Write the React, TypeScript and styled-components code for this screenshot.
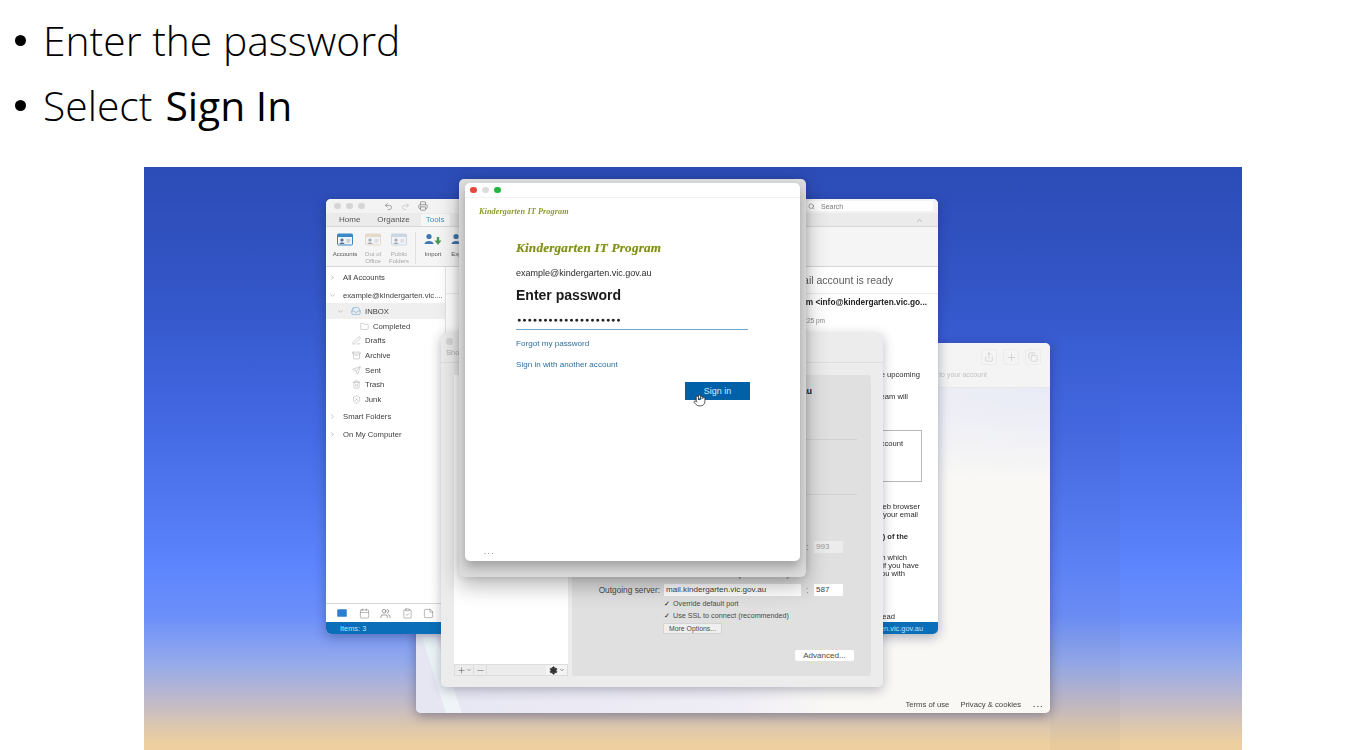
import React from "react";
import styled, { createGlobalStyle } from "styled-components";
import {
  Undo2, Redo2, Printer, ChevronRight, ChevronDown, ChevronUp, Search, Inbox, Folder, PenLine, Archive, Send, Trash2, ShieldX,
  Calendar, Users, ClipboardCheck, StickyNote, Mail, Share, Plus, Copy, Minus, Settings, Hand,
} from "lucide-react";

const Global = createGlobalStyle`
  html, body { margin: 0; padding: 0; background: #fff; overflow: hidden; }
  #root { width: 1359px; height: 750px; overflow: hidden; }
`;

const Page = styled.div`
  width: 1359px;
  height: 750px;
  display: flex;
  flex-direction: column;
  background: #fff;
`;

const Steps = styled.ul`
  list-style: none;
  margin: 0;
  padding: 8px 0 29px 15px;
  font-family: "Open Sans", "Noto Sans", sans-serif;
  font-weight: 300;
  font-size: 40.8px;
  line-height: 65px;
  color: #000;
`;

const Step = styled.li`
  display: flex;
  align-items: center;
  height: 65px;
  &::before {
    content: "";
    width: 11px;
    height: 11px;
    border-radius: 50%;
    background: #000;
    margin-right: 17px;
    flex: none;
  }
`;

const Strong = styled.span`
  font-weight: 400;
  margin-left: 0.32em;
`;

const Stage = styled.div`
  position: relative;
  width: 1098px;
  height: 583px;
  margin-left: 144px;
  overflow: hidden;
  background: linear-gradient(180deg, #2c4cb6 0%, #3356c8 22%, #4469e4 45%, #5c84fd 68%, #6b8ffa 77%, #94aaec 85%, #bcb8cd 91%, #dcc7ae 96%, #eecf9f 99%);
`;

const Halo = styled.div`
  position: absolute;
  left: 906px;
  top: 176px;
  width: 70px;
  height: 407px;
  background: linear-gradient(180deg, rgba(60, 70, 110, 0) 0%, rgba(70, 70, 100, 0.06) 30%, rgba(90, 80, 70, 0.04) 100%);
`;

const Desktop = styled.div`
  position: absolute;
  inset: 0;
  filter: blur(0.4px);
  font-family: "Liberation Sans", Arial, sans-serif;
  color: #333;
`;

/* ---------- back browser window ---------- */
const BackWindow = styled.section`
  position: absolute;
  left: 272px;
  top: 176px;
  width: 634px;
  height: 370px;
  border-radius: 5px;
  overflow: hidden;
  display: flex;
  flex-direction: column;
  background: #fff;
  box-shadow: 0 3px 12px rgba(30, 30, 60, 0.4);
`;

const BackHeader = styled.header`
  height: 45px;
  flex: none;
  box-sizing: border-box;
  padding: 6px 9px 0 0;
  background: #f4f4f4;
  border-bottom: 1px solid #e8e8ea;
  display: flex;
  flex-direction: column;
  align-items: flex-end;
`;

const BackTools = styled.div`
  display: flex;
  gap: 6px;
`;

const BackTool = styled.span`
  width: 16px;
  height: 16px;
  display: flex;
  align-items: center;
  justify-content: center;
  border: 1px solid #ececec;
  border-radius: 2px;
  box-sizing: border-box;
  color: #bcbcbc;
`;

const BackHint = styled.span`
  font-size: 7px;
  line-height: 8px;
  color: #c2c2c4;
  margin: 6px 54px 0 0;
`;

const BackBody = styled.div`
  position: relative;
  flex: 1;
  overflow: hidden;
  display: flex;
  flex-direction: column;
  justify-content: flex-end;
  background: radial-gradient(ellipse 60% 30% at 100% 0, #e8eaf6 0, rgba(232, 234, 246, 0) 100%),
    linear-gradient(90deg, #e6e6f3 0%, #efedf5 50%, #f9f8f5 65%, #f9f8f5 100%);
`;

const BackFacet = styled.div`
  position: absolute;
  left: 6px;
  bottom: 0;
  width: 40px;
  height: 76px;
  background: linear-gradient(120deg, #e8f4f6, #f1f4f8);
  clip-path: polygon(0 0, 35% 0, 100% 100%, 60% 100%);
`;

const BackFooter = styled.footer`
  position: relative;
  display: flex;
  justify-content: flex-end;
  align-items: center;
  height: 13px;
  margin-bottom: 2px;
  padding-right: 6px;
  gap: 11px;
  font-size: 7.7px;
  color: #444;
`;

const Ellipsis = styled.span`
  letter-spacing: 1.5px;
  font-weight: 700;
  margin-left: 1px;
`;

/* ---------- outlook window ---------- */
const OutlookWindow = styled.section`
  position: absolute;
  left: 182px;
  top: 32px;
  width: 612px;
  height: 435px;
  border-radius: 5px;
  overflow: hidden;
  display: flex;
  flex-direction: column;
  background: #fff;
  box-shadow: 0 3px 12px rgba(20, 30, 70, 0.35);
`;

const TitleBar = styled.div`
  height: 14px;
  flex: none;
  display: flex;
  align-items: center;
  background: #f3f3f3;
  padding: 0 5px 0 8px;
`;

const Dot = styled.span<{ $color?: string }>`
  width: 6.5px;
  height: 6.5px;
  border-radius: 50%;
  background: ${(p) => p.$color ?? "#d5d5d5"};
  margin-right: 5.5px;
  flex: none;
`;

const TitleTools = styled.div`
  display: flex;
  align-items: center;
  gap: 8px;
  margin-left: 14px;
  color: #8a8a8a;
`;

const SearchBox = styled.div`
  margin-left: auto;
  width: 127px;
  height: 10px;
  background: #fff;
  border-radius: 2px;
  display: flex;
  align-items: center;
  gap: 6px;
  font-size: 7px;
  color: #777;
  box-sizing: border-box;
  padding-left: 2px;
`;

const TabRow = styled.nav`
  height: 14px;
  flex: none;
  display: flex;
  align-items: flex-end;
  padding: 0 14px 0 13px;
  gap: 17px;
  background: #ebebeb;
  border-bottom: 1px solid #d8d8d8;
  box-sizing: border-box;
  font-size: 8px;
  color: #555;
`;

const Tab = styled.span<{ $active?: boolean }>`
  height: 12px;
  line-height: 12px;
  ${(p) =>
    p.$active
      ? `color:#3f8fc0;background:#f6f6f6;padding:0 5px;margin-left:-6px;border-radius:2px 2px 0 0;`
      : ""}
`;

const TabEnd = styled.span`
  margin-left: auto;
  color: #aaa;
  height: 12px;
  display: flex;
  align-items: center;
`;

const Ribbon = styled.div`
  height: 40px;
  flex: none;
  display: flex;
  box-sizing: border-box;
  padding: 5px 0 0 4px;
  background: #f5f5f5;
  border-bottom: 1px solid #d6d6d6;
`;

const RibbonItem = styled.div<{ $faded?: boolean; $w: number }>`
  width: ${(p) => p.$w}px;
  flex: none;
  display: flex;
  flex-direction: column;
  align-items: center;
  font-size: 6px;
  line-height: 7px;
  text-align: center;
  color: ${(p) => (p.$faded ? "#a8a8a8" : "#555")};
  svg {
    margin-bottom: 5px;
    opacity: ${(p) => (p.$faded ? 0.55 : 1)};
  }
`;

const RibbonDivider = styled.div`
  width: 1px;
  height: 32px;
  background: #e0e0e0;
  margin: 0 3px 0 3px;
  flex: none;
`;

const OutlookBody = styled.div`
  flex: 1;
  min-height: 0;
  display: flex;
`;

const Sidebar = styled.aside`
  width: 120px;
  flex: none;
  display: flex;
  flex-direction: column;
  border-right: 1px solid #e3e3e3;
  box-sizing: border-box;
`;

const FolderList = styled.div`
  flex: 1;
`;

const FolderRow = styled.div<{ $h: number; $indent: number; $active?: boolean }>`
  height: ${(p) => p.$h}px;
  display: flex;
  align-items: center;
  gap: 4px;
  padding-left: ${(p) => p.$indent}px;
  font-size: 7.7px;
  color: #3d3d3d;
  background: ${(p) => (p.$active ? "#efefef" : "transparent")};
  white-space: nowrap;
  svg { flex: none; }
`;

const Caret = styled.span`
  width: 10px;
  display: flex;
  flex: none;
  color: #999;
`;

const NavBar = styled.div`
  height: 19px;
  flex: none;
  display: flex;
  align-items: center;
  gap: 10.5px;
  padding-left: 10px;
  border-top: 1px solid #d8d8d8;
  box-sizing: border-box;
  color: #666;
`;

const Pane = styled.main`
  flex: 1;
  min-width: 0;
  overflow: hidden;
  display: flex;
  flex-direction: column;
  align-items: flex-end;
  font-size: 7.6px;
  line-height: 8px;
  color: #2b2b2b;
  white-space: nowrap;
`;

const PaneRule = styled.div`
  align-self: stretch;
  border-bottom: 1px solid #ececec;
  height: 26px;
  flex: none;
  display: flex;
  align-items: center;
  justify-content: flex-end;
  padding-right: 45px;
  font-size: 10.5px;
  color: #5c5c5c;
`;

const PaneLine = styled.div<{ $end: number; $top?: number; $bold?: boolean }>`
  flex: none;
  padding-right: ${(p) => p.$end}px;
  margin-top: ${(p) => p.$top ?? 0}px;
  font-weight: ${(p) => (p.$bold ? 700 : 400)};
`;

const Sender = styled(PaneLine)`
  font-weight: 700;
  font-size: 8.3px;
  margin-top: 4px;
  line-height: 8px;
  color: #222;
`;

const Stamp = styled(PaneLine)`
  color: #888;
  font-size: 6.5px;
`;

const NoticeBox = styled.div`
  flex: none;
  height: 52px;
  width: 300px;
  margin: 29px 16px 0 0;
  border: 1.5px solid #b8b8b8;
  box-sizing: border-box;
  text-align: right;
  padding: 9px 18px 0 0;
`;

const StatusBar = styled.footer`
  height: 12px;
  flex: none;
  display: flex;
  align-items: center;
  justify-content: space-between;
  padding: 0 15px 0 14px;
  background: #0a6fb8;
  color: #bfe0f5;
  font-size: 7.4px;
`;

/* ---------- settings window ---------- */
const SettingsWindow = styled.section`
  position: absolute;
  left: 297px;
  top: 166px;
  width: 442px;
  height: 354px;
  border-radius: 5px;
  overflow: hidden;
  display: flex;
  flex-direction: column;
  background: #ececec;
  box-shadow: 0 3px 12px rgba(30, 30, 60, 0.3);
`;

const SettingsHead = styled.header`
  height: 30px;
  flex: none;
  box-sizing: border-box;
  padding: 5px 0 0 5px;
  border-bottom: 1px solid #dedede;
  font-size: 7.5px;
  color: #aaa;
  display: flex;
  flex-direction: column;
  gap: 3px;
`;

const SettingsBody = styled.div`
  flex: 1;
  min-height: 0;
  display: flex;
  padding: 12px 12px 11px 13px;
  gap: 4px;
`;

const AccountColumn = styled.div`
  width: 114px;
  flex: none;
  display: flex;
  flex-direction: column;
  background: #fff;
`;

const AccountSpacer = styled.div`
  flex: 1;
`;

const AccountTools = styled.div`
  height: 12px;
  flex: none;
  display: flex;
  align-items: center;
  background: #ececec;
  border: 1px solid #dcdcdc;
  box-sizing: border-box;
  color: #555;
`;

const AccountTool = styled.span`
  height: 100%;
  display: flex;
  align-items: center;
  padding: 0 1px 0 2px;
  border-right: 1px solid #dcdcdc;
`;

const AccountGear = styled.span`
  margin-left: auto;
  height: 100%;
  display: flex;
  align-items: center;
  gap: 1px;
  padding: 0 2px 0 3px;
  color: #333;
  background: #f4f4f4;
`;

const FormPanel = styled.div`
  flex: 1;
  min-width: 0;
  display: flex;
  flex-direction: column;
  background: #e0e0e0;
  border-radius: 3px;
  padding-top: 8px;
  font-size: 8.3px;
  color: #4a4a4a;
`;

const AccountName = styled.div`
  height: 16px;
  line-height: 16px;
  text-align: right;
  font-weight: 700;
  font-size: 9px;
  color: #222;
  padding-right: 59px;
  white-space: nowrap;
`;

const FormRule = styled.div<{ $top: number }>`
  height: 1px;
  margin: ${(p) => p.$top}px 14px 0 16px;
  background: #d2d2d2;
  flex: none;
`;

const ServerRow = styled.div<{ $top: number }>`
  height: 12px;
  display: flex;
  align-items: center;
  margin-top: ${(p) => p.$top}px;
  flex: none;
`;

const ServerLabel = styled.span`
  width: 88px;
  text-align: right;
  margin-right: 4px;
  flex: none;
  white-space: nowrap;
`;

const ServerInput = styled.span<{ $dim?: boolean; $w: number }>`
  width: ${(p) => p.$w}px;
  height: 100%;
  box-sizing: border-box;
  padding-left: 2px;
  line-height: 12px;
  background: ${(p) => (p.$dim ? "#ececec" : "#fff")};
  color: ${(p) => (p.$dim ? "#999" : "#444")};
  flex: none;
  font-size: 8.1px;
  white-space: nowrap;
`;

const Colon = styled.span`
  width: 13px;
  text-align: center;
  flex: none;
  color: #777;
`;

const CheckRow = styled.div<{ $top: number }>`
  height: 10px;
  line-height: 10px;
  margin: ${(p) => p.$top}px 0 0 92px;
  flex: none;
  font-size: 7.2px;
  white-space: nowrap;
  &::before {
    content: "✓";
    color: #111;
    margin-right: 3px;
    font-size: 6.5px;
  }
`;

const MoreButton = styled.span`
  width: 59px;
  height: 11px;
  line-height: 10px;
  margin: 2px 0 0 91px;
  text-align: center;
  background: #efefef;
  border: 1px solid #d4d4d4;
  box-sizing: border-box;
  font-size: 6.9px;
  flex: none;
`;

const AdvancedButton = styled.span`
  width: 59px;
  height: 11px;
  line-height: 11px;
  margin: 16px 17px 0 0;
  align-self: flex-end;
  text-align: center;
  background: #fff;
  border-radius: 2px;
  font-size: 8.1px;
  flex: none;
`;

/* ---------- sign-in sheet ---------- */
const SheetFrame = styled.section`
  position: absolute;
  left: 315px;
  top: 12px;
  width: 347px;
  height: 398px;
  box-sizing: border-box;
  padding: 4px 6px 16px;
  border-radius: 5px;
  background: #dcdcdc;
  display: flex;
  box-shadow: 0 8px 22px rgba(0, 0, 0, 0.3), 0 0 8px rgba(0, 0, 0, 0.12);
`;

const SheetCard = styled.div`
  flex: 1;
  min-width: 0;
  background: #fff;
  border-radius: 5px;
  display: flex;
  flex-direction: column;
  box-shadow: 0 6px 12px rgba(0, 0, 0, 0.28);
`;

const SheetTitle = styled.div`
  height: 15px;
  flex: none;
  box-sizing: border-box;
  padding-left: 5px;
  display: flex;
  align-items: center;
  border-bottom: 1px solid #f1f1f1;
`;

const SmallLogo = styled.div`
  font-family: "Liberation Serif", serif;
  font-style: italic;
  font-weight: 700;
  font-size: 8.2px;
  line-height: 10px;
  color: #8c9a2b;
  margin: 9px 0 0 14px;
  letter-spacing: 0.1px;
`;

const SheetForm = styled.div`
  flex: 1;
  display: flex;
  flex-direction: column;
  padding: 0 52px 0 51px;
`;

const BigLogo = styled.div`
  font-family: "Liberation Serif", serif;
  font-style: italic;
  font-weight: 700;
  font-size: 13.2px;
  line-height: 16px;
  color: #7f8f24;
  text-shadow: 0 0 1px #c9d24a;
  margin-top: 23px;
  letter-spacing: 0.2px;
  white-space: nowrap;
`;

const Identity = styled.div`
  font-size: 9px;
  line-height: 12px;
  color: #2b2b2b;
  margin-top: 11px;
  white-space: nowrap;
`;

const Heading = styled.h1`
  margin: 7px 0 0;
  font-size: 14px;
  line-height: 18px;
  font-weight: 700;
  color: #1a1a1a;
`;

const PasswordField = styled.div`
  height: 20px;
  margin-top: 6px;
  box-sizing: border-box;
  border-bottom: 1px solid #6fa8cc;
  font-size: 7px;
  line-height: 19px;
  letter-spacing: 1px;
  color: #222;
  white-space: nowrap;
  padding-left: 1px;
`;

const FormLink = styled.a<{ $top: number }>`
  display: block;
  margin-top: ${(p) => p.$top}px;
  font-size: 8.1px;
  line-height: 10px;
  color: #2f6f9f;
`;

const SubmitRow = styled.div`
  position: relative;
  margin: 12px -2px 0 0;
  align-self: flex-end;
`;

const SubmitButton = styled.button`
  width: 65px;
  height: 18px;
  display: block;
  border: 0;
  padding: 0;
  background: #0060a8;
  color: #d7ebf8;
  font-family: inherit;
  font-size: 9px;
`;

const Pointer = styled.span`
  position: absolute;
  left: 8px;
  top: 12px;
  display: flex;
  color: #222;
`;

const SheetDots = styled.div`
  height: 16px;
  flex: none;
  padding-left: 19px;
  box-sizing: border-box;
  letter-spacing: 1.8px;
  font-size: 7px;
  line-height: 14px;
  font-weight: 700;
  color: #999;
`;

const folders = [
  { label: "All Accounts", h: 20, indent: 3, caret: "right" },
  { label: "example@kindergarten.vic....", h: 16, indent: 3, caret: "down" },
  { label: "INBOX", h: 16, indent: 11, caret: "down", icon: Inbox, active: true },
  { label: "Completed", h: 14.5, indent: 34, icon: Folder },
  { label: "Drafts", h: 14.7, indent: 26, icon: PenLine },
  { label: "Archive", h: 14.7, indent: 26, icon: Archive },
  { label: "Sent", h: 14.7, indent: 26, icon: Send },
  { label: "Trash", h: 14.7, indent: 26, icon: Trash2 },
  { label: "Junk", h: 14.7, indent: 26, icon: ShieldX },
  { label: "Smart Folders", h: 19, indent: 3, caret: "right" },
  { label: "On My Computer", h: 18, indent: 3, caret: "right" },
];

const ribbonItems = [
  { lines: ["Accounts"], w: 30, color: "#3b88c4", faded: false },
  { lines: ["Out of", "Office"], w: 26, color: "#d9c4a4", faded: true },
  { lines: ["Public", "Folders"], w: 26, color: "#a6bfd6", faded: true },
];

const RibbonGlyph = ({ color }: { color: string }) => (
  <svg width="18" height="14" viewBox="0 0 18 14">
    <rect x="1.5" y="2" width="15" height="11" rx="1" fill="#eef3f7" stroke={color} />
    <rect x="1.5" y="2" width="15" height="3" fill={color} />
    <circle cx="6" cy="8" r="1.6" fill="#667" />
    <path d="M3.5 12c0-2 5-2 5 0z" fill="#667" />
    <path d="M10.5 8h4M10.5 10h3" stroke="#99a" strokeWidth="0.8" />
  </svg>
);

const ImportGlyph = () => (
  <svg width="20" height="14" viewBox="0 0 20 14">
    <circle cx="6" cy="4.5" r="2.6" fill="#3f78b0" />
    <path d="M1.5 12c0-4 9-4 9 0z" fill="#3f78b0" />
    <path d="M15 5v4" stroke="#4a9b57" strokeWidth="2.4" />
    <path d="M11.5 8.5h7L15 13z" fill="#4a9b57" />
  </svg>
);

export default function App() {
  return (
    <Page>
      <Global />
      <Steps>
        <Step>Enter the password</Step>
        <Step>
          Select<Strong>Sign In</Strong>
        </Step>
      </Steps>
      <Stage>
        <Halo />
        <Desktop>
          <BackWindow>
            <BackHeader>
              <BackTools>
                <BackTool><Share size={10} strokeWidth={1.2} /></BackTool>
                <BackTool><Plus size={11} strokeWidth={1.2} /></BackTool>
                <BackTool><Copy size={10} strokeWidth={1.2} /></BackTool>
              </BackTools>
              <BackHint>Sign in to your account</BackHint>
            </BackHeader>
            <BackBody>
              <BackFacet />
              <BackFooter>
                <span>Terms of use</span>
                <span>Privacy &amp; cookies</span>
                <Ellipsis>...</Ellipsis>
              </BackFooter>
            </BackBody>
          </BackWindow>

          <OutlookWindow>
            <TitleBar>
              <Dot />
              <Dot />
              <Dot />
              <TitleTools>
                <Undo2 size={9} />
                <Redo2 size={9} color="#c4c4c4" />
                <Printer size={10} />
              </TitleTools>
              <SearchBox>
                <Search size={7} />
                Search
              </SearchBox>
            </TitleBar>
            <TabRow>
              <Tab>Home</Tab>
              <Tab>Organize</Tab>
              <Tab $active>Tools</Tab>
              <TabEnd><ChevronUp size={9} /></TabEnd>
            </TabRow>
            <Ribbon>
              {ribbonItems.map((item) => (
                <RibbonItem key={item.lines[0]} $w={item.w} $faded={item.faded}>
                  <RibbonGlyph color={item.color} />
                  {item.lines.map((l) => (
                    <span key={l}>{l}</span>
                  ))}
                </RibbonItem>
              ))}
              <RibbonDivider />
              <RibbonItem $w={28}>
                <ImportGlyph />
                <span>Import</span>
              </RibbonItem>
              <RibbonItem $w={26}>
                <ImportGlyph />
                <span>Export</span>
              </RibbonItem>
            </Ribbon>
            <OutlookBody>
              <Sidebar>
                <FolderList>
                  {folders.map((f) => {
                    const Icon = f.icon;
                    return (
                      <FolderRow key={f.label} $h={f.h} $indent={f.indent} $active={f.active}>
                        {f.caret && (
                          <Caret>
                            {f.caret === "right" ? <ChevronRight size={7} /> : <ChevronDown size={7} />}
                          </Caret>
                        )}
                        {Icon && (
                          <Icon
                            size={f.label === "INBOX" ? 10 : 9}
                            strokeWidth={1}
                            color={f.label === "INBOX" ? "#3a86c8" : "#888"}
                          />
                        )}
                        <span>{f.label}</span>
                      </FolderRow>
                    );
                  })}
                </FolderList>
                <NavBar>
                  <Mail size={12} color="#fff" fill="#2c7fd0" strokeWidth={1} />
                  <Calendar size={11} strokeWidth={1} />
                  <Users size={11} strokeWidth={1.4} />
                  <ClipboardCheck size={11} strokeWidth={1} />
                  <StickyNote size={11} strokeWidth={1} />
                </NavBar>
              </Sidebar>
              <Pane>
                <PaneRule>Your email account is ready</PaneRule>
                <Sender $end={11}>Kindergarten IT Program &lt;info@kindergarten.vic.go...</Sender>
                <Stamp $end={113} $top={11}>Tuesday 12:25 pm</Stamp>
                <PaneLine $end={18} $top={46}>Your account details for the upcoming</PaneLine>
                <PaneLine $end={30} $top={14}>year are below. The IT team will</PaneLine>
                <NoticeBox>Your account</NoticeBox>
                <PaneLine $end={18} $top={21}>To sign in from a web browser</PaneLine>
                <PaneLine $end={20}>enter your email</PaneLine>
                <PaneLine $end={30} $top={14} $bold>Step (1) of the</PaneLine>
                <PaneLine $end={31} $top={13}>Contact the team which</PaneLine>
                <PaneLine $end={19}>can help if you have</PaneLine>
                <PaneLine $end={33}>provide you with</PaneLine>
                <PaneLine $end={43} $top={35}>read</PaneLine>
              </Pane>
            </OutlookBody>
            <StatusBar>
              <span>Items: 3</span>
              <span>info@kindergarten.vic.gov.au</span>
            </StatusBar>
          </OutlookWindow>

          <SettingsWindow>
            <SettingsHead>
              <Dot />
              <span>Show All</span>
            </SettingsHead>
            <SettingsBody>
              <AccountColumn>
                <AccountSpacer />
                <AccountTools>
                  <AccountTool>
                    <Plus size={9} strokeWidth={1.4} />
                    <ChevronDown size={6} />
                  </AccountTool>
                  <AccountTool>
                    <Minus size={9} strokeWidth={1.4} />
                  </AccountTool>
                  <AccountGear>
                    <Settings size={9} fill="#333" />
                    <ChevronDown size={6} />
                  </AccountGear>
                </AccountTools>
              </AccountColumn>
              <FormPanel>
                <AccountName>example@kindergarten.vic.gov.au</AccountName>
                <FormRule $top={40} />
                <FormRule $top={54} />
                <ServerRow $top={46}>
                  <ServerLabel>Incoming server:</ServerLabel>
                  <ServerInput $w={137} $dim>mail.kindergarten.vic.gov.au</ServerInput>
                  <Colon>:</Colon>
                  <ServerInput $w={29} $dim>993</ServerInput>
                </ServerRow>
                <CheckRow $top={17}>Use SSL to connect (recommended)</CheckRow>
                <ServerRow $top={4}>
                  <ServerLabel>Outgoing server:</ServerLabel>
                  <ServerInput $w={137}>mail.kindergarten.vic.gov.au</ServerInput>
                  <Colon>:</Colon>
                  <ServerInput $w={29}>587</ServerInput>
                </ServerRow>
                <CheckRow $top={3}>Override default port</CheckRow>
                <CheckRow $top={2}>Use SSL to connect (recommended)</CheckRow>
                <MoreButton>More Options...</MoreButton>
                <AdvancedButton>Advanced...</AdvancedButton>
              </FormPanel>
            </SettingsBody>
          </SettingsWindow>

          <SheetFrame>
            <SheetCard>
              <SheetTitle>
                <Dot $color="#e8453c" />
                <Dot $color="#dcdcdc" />
                <Dot $color="#27b33f" />
              </SheetTitle>
              <SmallLogo>Kindergarten IT Program</SmallLogo>
              <SheetForm>
                <BigLogo>Kindergarten IT Program</BigLogo>
                <Identity>example@kindergarten.vic.gov.au</Identity>
                <Heading>Enter password</Heading>
                <PasswordField>●●●●●●●●●●●●●●●●●●●●</PasswordField>
                <FormLink $top={9}>Forgot my password</FormLink>
                <FormLink $top={11}>Sign in with another account</FormLink>
                <SubmitRow>
                  <SubmitButton>Sign in</SubmitButton>
                  <Pointer>
                    <Hand size={13} strokeWidth={1.4} fill="#fff" />
                  </Pointer>
                </SubmitRow>
              </SheetForm>
              <SheetDots>...</SheetDots>
            </SheetCard>
          </SheetFrame>
        </Desktop>
      </Stage>
    </Page>
  );
}
